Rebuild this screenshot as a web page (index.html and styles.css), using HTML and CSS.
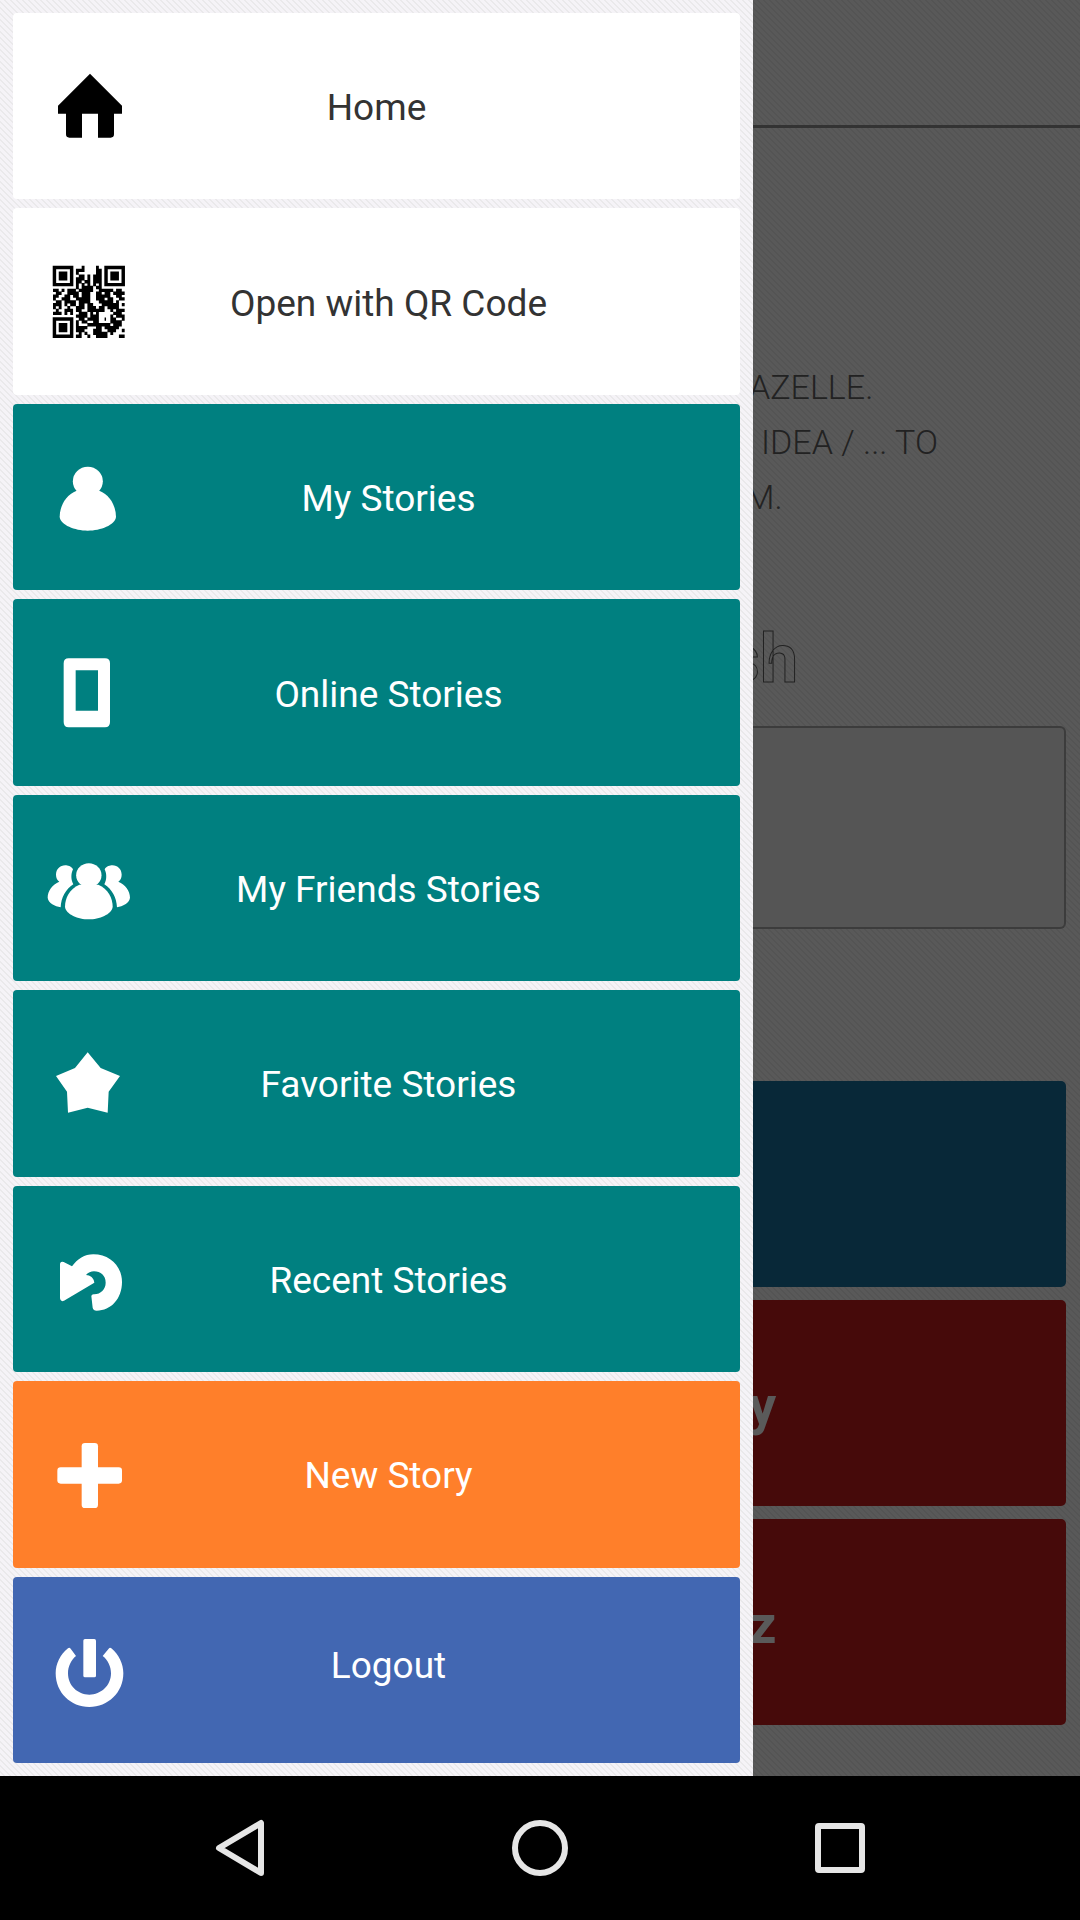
FILE: index.html
```html
<!DOCTYPE html>
<html lang="en">
<head>
<meta charset="utf-8">
<meta name="viewport" content="width=device-width, initial-scale=1">
<title>Stories menu</title>
<link rel="stylesheet" href="styles.css">
</head>
<body>
<div class="screen">
  <div class="app">
    <nav class="drawer" aria-label="Main menu">
      <a class="item item-light item-home" href="#home">
        <svg class="item-icon" viewBox="123 175 288 288" aria-hidden="true"><path d="M270 222L366 318V342H342V404Q342 414 332 414H294V342H246V414H208Q198 414 198 404V342H174V318Z"/></svg>
        <span class="item-label">Home</span>
      </a>
      <a class="item item-light" href="#qr">
        <svg class="item-icon" viewBox="3 -4 288 288" aria-hidden="true">
          <g transform="translate(39 32) scale(8.6)" fill="none" stroke="currentColor">
            <path stroke-width="1.2" d="M.5 .5h6v6h-6zM18.5 .5h6v6h-6zM.5 18.5h6v6h-6z"/>
            <path stroke-width="3.2" d="M2 3.5h3M20 3.5h3M2 21.5h3"/>
            <path stroke-width="1.15" d="M10 .5h1M15 .5h1M8 1.5h3M15 1.5h2M8 2.5h1M15 2.5h2M9 3.5h2M12 3.5h1M14 3.5h3M8 4.5h3M12 4.5h1M14 4.5h3M8 5.5h2M11 5.5h2M14 5.5h3M8 6.5h1M10 6.5h1M12 6.5h1M14 6.5h1M16 6.5h1M8 7.5h1M10 7.5h4M15 7.5h2M0 8.5h2M3 8.5h1M5 8.5h3M9 8.5h5M16 8.5h5M22 8.5h2M1 9.5h2M5 9.5h4M10 9.5h3M15 9.5h2M18 9.5h2M21 9.5h4M0 10.5h2M4 10.5h2M7 10.5h2M10 10.5h3M15 10.5h5M22 10.5h2M0 11.5h1M3 11.5h3M8 11.5h5M15 11.5h3M19 11.5h2M23 11.5h2M1 12.5h2M4 12.5h4M9 12.5h4M16 12.5h5M22 12.5h1M0 13.5h3M4 13.5h1M6 13.5h2M9 13.5h2M12 13.5h2M17 13.5h6M24 13.5h1M0 14.5h1M2 14.5h1M5 14.5h1M8 14.5h3M12 14.5h3M16 14.5h2M19 14.5h4M1 15.5h1M4 15.5h3M8 15.5h2M12 15.5h6M20 15.5h1M22 15.5h3M0 16.5h3M4 16.5h1M6 16.5h1M9 16.5h3M13 16.5h1M15 16.5h1M21 16.5h3M8 17.5h4M13 17.5h3M20 17.5h1M22 17.5h3M9 18.5h2M12 18.5h4M18 18.5h.5M20 18.5h2M24 18.5h1M8 19.5h1M10 19.5h2M14 19.5h2M20 19.5h4M8 20.5h1M12 20.5h8M21 20.5h3M8 21.5h4M15 21.5h2M18 21.5h5M8 22.5h3M14 22.5h3M19 22.5h3M24 22.5h1M9 23.5h1M11 23.5h1M14 23.5h5M20 23.5h1M8 24.5h2M12 24.5h1M15 24.5h4M23 24.5h2"/>
          </g>
        </svg>
        <span class="item-label">Open with QR Code</span>
      </a>
      <a class="item item-teal" href="#mine">
        <svg class="item-icon" viewBox="3 28 288 288" aria-hidden="true"><ellipse cx="143.500" cy="125" rx="45" ry="44"/><path d="M110 153C77 165 59 200 59 232C62 256 104 273 143 273S225 256 228 232C228 200 210 165 178 153Z"/></svg>
        <span class="item-label">My Stories</span>
      </a>
      <a class="item item-teal" href="#online">
        <svg class="item-icon" viewBox="18 15 288 288" aria-hidden="true"><path fill-rule="evenodd" d="M101 55H210Q225 55 225 70V246Q225 262 210 262H101Q86 262 86 246V70Q86 55 101 55ZM122 91V212H189V91Z"/></svg>
        <span class="item-label">Online Stories</span>
      </a>
      <a class="item item-teal" href="#friends">
        <svg class="item-icon" viewBox="18 602 288 288" aria-hidden="true"><ellipse cx="161.500" cy="708" rx="38" ry="36"/><path d="M133 736C104 748 90 776 90 802C92 825 130 840 161 840S231 825 233 802C233 776 219 748 190 736Z"/><path id="friend" d="M114 690C108 680 98 678 91 678C75 678 63 690 63 706C63 716 67 723 73 727C52 735 38 755 38 775C40 792 60 800 77 804C78 775 92 750 115 735C108 722 107 705 114 690Z"/><use href="#friend" transform="translate(323 0) scale(-1 1)"/></svg>
        <span class="item-label">My Friends Stories</span>
      </a>
      <a class="item item-teal" href="#favorite">
        <svg class="item-icon" viewBox="3 18 288 288" aria-hidden="true"><path d="M143 70L182 117L240 141L206 188L203 251L143 236L84 251L81 188L48 141L105 117Z"/></svg>
        <span class="item-label">Favorite Stories</span>
      </a>
      <a class="item item-teal" href="#recent">
        <svg class="item-icon" viewBox="3 605 288 288" aria-hidden="true"><path d="M60 706Q60 695 71 698L96 711C112 689 134 675 160 675C210 675 246 711 246 758C246 808 213 844 170 844Q160 844 158 835L154 800Q155 794 163 795C182 794 197 780 197 760C197 739 182 726 162 726Q148 726 138 737C150 737 162 746 163 760L72 814Q61 819 60 807Z"/></svg>
        <span class="item-label">Recent Stories</span>
      </a>
      <a class="item item-orange" href="#new">
        <svg class="item-icon" viewBox="3 21 288 288" aria-hidden="true"><rect x="125" y="72" width="49" height="195" rx="10"/><rect x="52" y="145" width="194" height="49" rx="10"/></svg>
        <span class="item-label">New Story</span>
      </a>
      <a class="item item-blue" href="#logout">
        <svg class="item-icon" viewBox="3 608 288 288" aria-hidden="true"><rect x="130" y="659" width="38" height="115" rx="5"/><path d="M84 687Q88 683 92 688L108 710C93 722 84 742 84 762C84 799 113 826 148 826S213 799 213 762C213 742 204 722 188 710L206 688Q210 683 214 687C237 706 250 734 250 762C250 820 204 863 148 863S47 820 47 762C47 734 60 706 84 687Z"/></svg>
        <span class="item-label">Logout</span>
      </a>
    </nav>
    <main class="page">
      <header class="page-bar"></header>
      <div class="intro">
        <p class="line line-first">AZELLE.</p>
        <p class="line line-second">IDEA / ... TO</p>
        <p class="line line-third">M.</p>
      </div>
      <h1 class="wordmark">sh</h1>
      <input class="field" type="text" aria-label="Answer">
      <div class="actions">
        <button class="action action-navy" type="button" aria-label="Open"></button>
        <button class="action action-red" type="button">y</button>
        <button class="action action-red" type="button">z</button>
      </div>
    </main>
  </div>
  <footer class="system-bar">
    <button class="key" type="button" aria-label="Back"><svg viewBox="0 0 64 64"><path d="M53 7V57L11 32Z"/></svg></button>
    <button class="key" type="button" aria-label="Home"><svg viewBox="0 0 64 64"><circle cx="32" cy="32" r="25"/></svg></button>
    <button class="key" type="button" aria-label="Recent apps"><svg viewBox="0 0 64 64"><rect x="10" y="10" width="44" height="44" rx="1"/></svg></button>
  </footer>
</div>
</body>
</html>
```
FILE: styles.css
```css
* {
  box-sizing: border-box;
}

body {
  margin: 0;
  font-family: Roboto, "Noto Sans", sans-serif;
}

.screen {
  display: flex;
  flex-direction: column;
  min-height: 100vh;
}

.app {
  flex: 1;
  display: grid;
  grid-template-columns: calc(70% - 3px) 1fr;
}

/* Drawer */
.drawer {
  display: flex;
  flex-direction: column;
  gap: 9px;
  padding: 13px;
  background: linear-gradient(45deg, #f5f3f7 0 30%, #eae9eb 30% 50%, #f5f3f7 50% 80%, #eae9eb 80%) 0 0 / 6px 6px;
}

.item {
  flex: 1;
  display: grid;
  align-items: center;
  min-height: 120px;
  padding-left: 24px;
  border-radius: 4px;
  color: #fff;
  font-size: 37px;
  line-height: 44px;
  text-decoration: none;
}

.item-icon,
.item-label {
  grid-area: 1 / 1;
}

.item-icon {
  width: 96px;
  height: 96px;
  margin-left: 4px;
  fill: currentColor;
}

.item-label {
  justify-self: center;
  padding-top: 4px;
}

.item-light {
  background: #fff;
  color: #000;
}

.item-light .item-label {
  color: #333;
}

.item-home {
  padding-left: 0;
}

.item-home .item-icon {
  margin-left: 28px;
}

.item-teal {
  background: #008080;
}

.item-orange {
  background: #ff7f2a;
}

.item-blue {
  background: #4267b2;
}

.item-blue .item-label {
  padding: 0 0 8px;
}

/* Dimmed page beside the drawer */
.page {
  overflow: hidden;
  background: linear-gradient(45deg, #595959 0 30%, #545454 30% 50%, #595959 50% 80%, #545454 80%) 0 0 / 6px 6px;
}

.page-bar {
  height: 128px;
  border-bottom: 3px solid #333;
}

.intro {
  padding-top: 232px;
  color: #222;
  font-size: 34px;
  font-weight: 300;
  line-height: 55px;
}

.line {
  margin: 0;
  white-space: nowrap;
}

.line-first {
  text-indent: -4px;
}

.line-second {
  text-indent: 8px;
}

.line-third {
  text-indent: -8px;
}

.wordmark {
  margin: 94px 0 0 -28px;
  color: transparent;
  font-size: 68px;
  font-weight: 700;
  line-height: 80px;
  -webkit-text-stroke: 1px #222;
}

.field {
  display: block;
  width: calc(100% - 14px);
  height: 203px;
  margin-top: 27px;
  border: 2px solid #3c3c3c;
  border-left: 0;
  border-radius: 0 6px 6px 0;
  background: #555;
}

.actions {
  display: grid;
  gap: 13px;
  margin: 152px 14px 51px 0;
}

.action {
  height: 206px;
  padding: 6px 0 0;
  border: 0;
  border-radius: 0 5px 5px 0;
  color: #5a5a5a;
  font: 700 54px/64px Roboto, "Noto Sans", sans-serif;
  text-align: left;
  text-indent: -4px;
}

.action-navy {
  background: #082838;
}

.action-red {
  background: #460a0a;
}

/* System navigation */
.system-bar {
  display: flex;
  justify-content: space-between;
  align-items: center;
  height: 144px;
  padding: 0 208px;
  background: #000;
}

.key {
  width: 64px;
  height: 64px;
  padding: 0;
  border: 0;
  background: none;
}

.key svg {
  display: block;
  width: 100%;
  height: 100%;
  fill: none;
  stroke: #e6e6e6;
  stroke-width: 6px;
  stroke-linejoin: round;
}
```
